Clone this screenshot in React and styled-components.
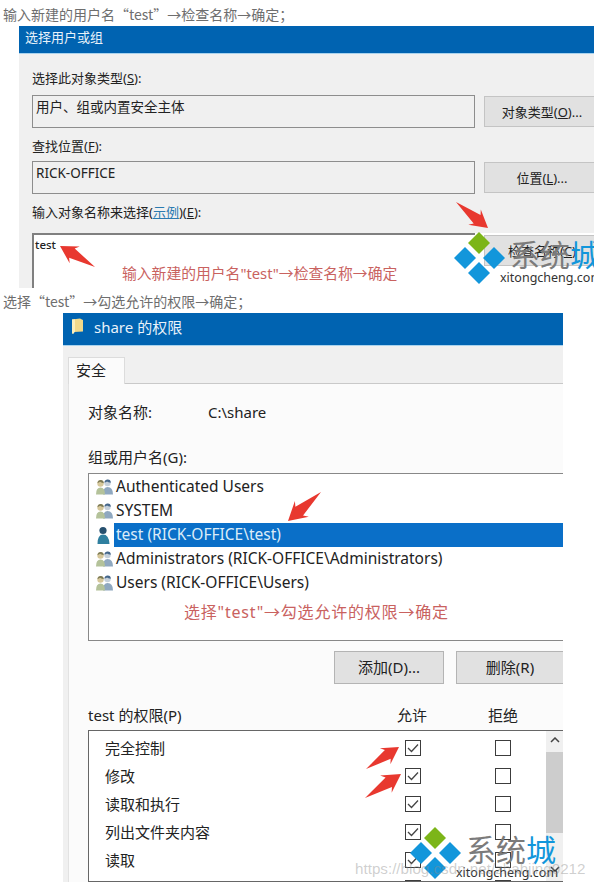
import React from "react";
import styled, { createGlobalStyle } from "styled-components";

const FONT = `"Noto Sans", "Noto Sans CJK SC", sans-serif`;
const CJK_FONT = `"Noto Sans CJK SC", "Noto Sans", sans-serif`;

const GlobalStyle = createGlobalStyle`
    html, body {
        margin: 0;
        padding: 0;
        background: #fff;
    }
    * {
        box-sizing: border-box;
    }
`;

const Page = styled.div`
    position: relative;
    width: 594px;
    height: 887px;
    padding-top: 7px;
    overflow: hidden;
    background: #fff;
    font-family: ${FONT};
    color: #222;
`;

const Caption = styled.p`
    margin: ${(p) => p.$top}px 0 5px 3px;
    height: 14px;
    font-family: ${CJK_FONT};
    font-size: 14px;
    line-height: 14px;
    color: #6e6e6e;
    white-space: nowrap;
`;

/* first dialog */
const Dialog = styled.section`
    margin-left: ${(p) => p.$left}px;
    width: ${(p) => p.$width}px;
    height: ${(p) => p.$height}px;
    overflow: hidden;
    background: #f0f0f0;
`;

const TitleBar = styled.header`
    display: flex;
    align-items: center;
    gap: 10px;
    height: ${(p) => p.$height}px;
    padding: 0 0 ${(p) => p.$lift}px ${(p) => p.$pad}px;
    background: #0063b1;
    border-bottom: 1px solid #a9d3ee;
    color: #e8f2fa;
    font-size: ${(p) => p.$size}px;
`;

const PickerBody = styled.div`
    padding: 16px 0 0 13px;
`;

const PickerLabel = styled.div`
    height: 16px;
    margin-bottom: ${(p) => p.$gap}px;
    font-size: 13px;
    line-height: 16px;
    white-space: nowrap;
`;

const Access = styled.span`
    text-decoration: underline;
`;

const HelpLink = styled.span`
    color: #2a7ab0;
    text-decoration: underline;
`;

const FieldRow = styled.div`
    display: flex;
    gap: 9px;
    margin-bottom: 10px;
    background: ${(p) => (p.$white ? "#fff" : "transparent")};
`;

const ReadonlyField = styled.div`
    flex: 0 0 443px;
    height: 33px;
    padding: 2px 0 0 3px;
    border: 1px solid #8d8d8d;
    background: #f0f0f0;
    font-size: 13.5px;
    line-height: 18px;
`;

const NameInput = styled.div`
    flex: 0 0 443px;
    height: 60px;
    padding: 2px 0 0 1px;
    border-top: 2px solid #808080;
    border-left: 2px solid #808080;
    background: #fff;
    font-size: 11.5px;
    line-height: 15px;
    font-weight: 500;
`;

const PickerButton = styled.div`
    display: flex;
    align-items: center;
    justify-content: center;
    flex: 0 0 116px;
    height: 31px;
    margin-top: ${(p) => p.$top}px;
    border: 1px solid #c4c4c4;
    background: #e1e1e1;
    font-size: 13px;
    white-space: nowrap;
`;

/* second dialog */
const FolderIcon = () => (
    <svg width="13" height="17" viewBox="0 0 13 17">
        <path d="M1 1.5 L9 .5 L12 2 L12 13.5 L3 14 L2 16 L1 15 Z" fill="#f2d98a" />
        <path d="M1 1.5 L4 1.2 L4 13.8 L2 16 L1 15 Z" fill="#fbeebc" />
    </svg>
);

const TabStrip = styled.div`
    display: flex;
    padding: 11px 0 0 5px;
`;

const Tab = styled.div`
    position: relative;
    z-index: 1;
    width: 57px;
    height: 27px;
    margin-bottom: -1px;
    padding-left: 7px;
    background: #fbfbfb;
    border: 1px solid #dcdcdc;
    border-bottom: 0;
    font-size: 15px;
    line-height: 24px;
`;

const Pane = styled.div`
    margin-left: 5px;
    height: 500px;
    padding: 18px 0 0 19px;
    overflow: hidden;
    background: #fbfbfb;
    border-top: 1px solid #c9c9c9;
    border-left: 1px solid #e2e2e2;
`;

const InfoRow = styled.div`
    display: grid;
    grid-template-columns: 120px auto;
    height: 20px;
    font-size: 15px;
    line-height: 20px;
`;

const PaneLabel = styled.div`
    height: 20px;
    margin-top: 25px;
    font-size: 15px;
    line-height: 20px;
`;

const UserList = styled.ul`
    height: 168px;
    margin: 6px 0 0;
    padding: 1px 0 0 6px;
    list-style: none;
    border: 1px solid #888;
    border-right: 0;
    background: #fff;
`;

const UserRow = styled.li`
    display: flex;
    align-items: center;
    gap: 1px;
    height: 24px;
    font-size: 15.5px;
`;

const UserName = styled.span`
    flex: 1;
    height: 24px;
    padding-left: 2px;
    line-height: 22px;
    white-space: nowrap;
    background: ${(p) => (p.$selected ? "#0a6fc8" : "transparent")};
    color: ${(p) => (p.$selected ? "#dcecf8" : "#222")};
`;

const ActionRow = styled.div`
    display: flex;
    gap: 12px;
    margin: 10px 0 0 246px;
`;

const ActionButton = styled.div`
    display: flex;
    flex: 0 0 ${(p) => p.$width}px;
    align-items: center;
    justify-content: center;
    height: 33px;
    padding-bottom: 3px;
    background: #e1e1e1;
    border: 1px solid #b4b4b4;
    font-size: 15px;
`;

const PermHeader = styled.div`
    display: grid;
    grid-template-columns: 309px 91px auto;
    height: 20px;
    margin-top: 21px;
    font-size: 15px;
    line-height: 20px;
`;

const PermList = styled.div`
    display: flex;
    height: 152px;
    margin-top: 5px;
    overflow: hidden;
    border: 1px solid #666;
    border-right: 0;
    background: #fff;
`;

const PermRows = styled.div`
    flex: 1;
    padding: 3px 0 0 16px;
`;

const PermRow = styled.div`
    display: grid;
    grid-template-columns: 300px 90px 16px;
    align-items: center;
    height: 28px;
    font-size: 15px;
`;

const PermName = styled.span`
    padding-bottom: 2px;
`;

const Box = styled.div`
    display: flex;
    align-items: center;
    justify-content: center;
    width: 16px;
    height: 16px;
    border: 1px solid #3c3c3c;
    background: #fff;
`;

const CheckMark = () => (
    <svg width="12" height="10" viewBox="0 0 12 10">
        <path d="M1 5 L4.5 8.5 L11 1.5" fill="none" stroke="#444" strokeWidth="1.3" />
    </svg>
);

const Scrollbar = styled.div`
    display: flex;
    flex: 0 0 17px;
    flex-direction: column;
    background: #f0f0f0;
`;

const ScrollArrow = styled.div`
    display: flex;
    flex: 0 0 ${(p) => p.$height}px;
    align-items: center;
    justify-content: center;
    padding-bottom: 4px;
`;

const ScrollThumb = styled.div`
    flex: 0 0 81px;
    background: #cdcdcd;
`;

const ScrollGap = styled.div`
    flex: 1;
`;

const Chevron = ({ down }) => (
    <svg width="10" height="6" viewBox="0 0 10 6">
        <path d={down ? "M1 1 L5 5 L9 1" : "M1 5 L5 1 L9 5"} fill="none" stroke="#444" strokeWidth="1.5" />
    </svg>
);

const GroupIcon = () => (
    <svg width="18" height="16" viewBox="0 0 18 16" style={{ flex: "none" }}>
        <circle cx="12.5" cy="4" r="3.2" fill="#c5d0da" />
        <path d="M9.4 3.6 Q10 .4 12.8 .5 Q15.8 .6 15.8 3.8 Q13 3.4 12 2.4 Q11 3.4 9.4 3.6 Z" fill="#45678a" />
        <path d="M8 15.5 Q8 8 12.5 8 Q18 8 18 15.5 Z" fill="#8fa8c0" />
        <circle cx="5.5" cy="4.5" r="3.2" fill="#d6c79a" />
        <path d="M2.4 4 Q3 .8 5.8 .9 Q8.8 1 8.8 4.2 Q6 3.8 5 2.8 Q4 3.8 2.4 4 Z" fill="#7c7a55" />
        <path d="M1 15.5 Q1 8.5 5.5 8.5 Q10 8.5 10 15.5 Z" fill="#b4c29a" />
    </svg>
);

const UserIcon = () => (
    <svg width="18" height="19" viewBox="0 0 18 19" style={{ flex: "none" }}>
        <circle cx="8" cy="4.5" r="3.6" fill="#26506f" />
        <path d="M2.5 18 Q2.5 8.5 8 8.5 Q14 8.5 14.5 18 Z" fill="#2f7f9f" />
    </svg>
);

/* things lying over the screenshots */
const Annotation = styled.div`
    position: absolute;
    left: ${(p) => p.$left}px;
    top: ${(p) => p.$top}px;
    font-size: ${(p) => p.$size}px;
    letter-spacing: ${(p) => p.$spacing}px;
    line-height: 20px;
    color: #c9625f;
    white-space: nowrap;
`;

const Overlay = styled.svg`
    position: absolute;
    left: 0;
    top: 0;
`;

const Watermark = styled.div`
    position: absolute;
    left: ${(p) => p.$left}px;
    top: ${(p) => p.$top}px;
    display: flex;
    white-space: nowrap;
`;

const MarkText = styled.div`
    display: flex;
    flex-direction: column;
    margin-left: -5px;
    padding-top: 8px;
`;

const MarkName = styled.div`
    margin-left: 10px;
    font-size: 30px;
    line-height: 30px;
    color: #7b7b7b;
`;

const MarkAccent = styled.span`
    color: #1296db;
`;

const MarkDomain = styled.div`
    font-size: 12.5px;
    line-height: 16px;
    color: #333;
`;

const BlogUrl = styled.div`
    position: absolute;
    left: 355px;
    top: 859px;
    font-family: "Liberation Sans", sans-serif;
    font-size: 15.2px;
    line-height: 20px;
    color: rgba(140, 140, 140, 0.42);
    white-space: nowrap;
`;

const Diamond = ({ x, y, color }) => (
    <polygon points={`${x},${y - 11} ${x + 11},${y} ${x},${y + 11} ${x - 11},${y}`} fill={color} />
);

const Logo = () => (
    <svg width="51" height="52" viewBox="0 0 51 52" style={{ flex: "none" }}>
        <Diamond x={25} y={11} color="#7cb518" />
        <Diamond x={11} y={26} color="#1296db" />
        <Diamond x={40} y={26} color="#1296db" />
        <Diamond x={25} y={41} color="#1296db" />
    </svg>
);

const Mark = ({ left, top }) => (
    <Watermark $left={left} $top={top}>
        <Logo />
        <MarkText>
            <MarkName>
                系统<MarkAccent>城</MarkAccent>
            </MarkName>
            <MarkDomain>xitongcheng.com</MarkDomain>
        </MarkText>
    </Watermark>
);

const arrows = [
    [95, 267, 60, 246],
    [456, 202, 488, 228],
    [321, 492, 288, 521],
    [366, 769, 399, 747],
    [365, 798, 401, 774],
];

// long thin tail, widening into a barbed head at the tip
function arrowPoints([x1, y1, x2, y2]) {
    const len = Math.hypot(x2 - x1, y2 - y1);
    const ux = (x2 - x1) / len;
    const uy = (y2 - y1) / len;
    const at = (along, side) =>
        `${x1 + ux * along - uy * side},${y1 + uy * along + ux * side}`;
    const w = len * 0.24;
    return [
        at(0, 0),
        at(len * 0.66, w * 0.55),
        at(len * 0.58, w),
        at(len, 0),
        at(len * 0.58, -w),
        at(len * 0.66, -w * 0.55),
    ].join(" ");
}

const users = [
    { name: "Authenticated Users" },
    { name: "SYSTEM" },
    { name: "test (RICK-OFFICE\\test)", selected: true },
    { name: "Administrators (RICK-OFFICE\\Administrators)" },
    { name: "Users (RICK-OFFICE\\Users)" },
];

const perms = ["完全控制", "修改", "读取和执行", "列出文件夹内容", "读取", "写入"];

export default function App() {
    return (
        <Page>
            <GlobalStyle />
            <Caption $top={0}>输入新建的用户名“test”→检查名称→确定；</Caption>
            <Dialog $left={19} $width={575} $height={262}>
                <TitleBar $height={28} $lift={6} $pad={6} $size={13}>选择用户或组</TitleBar>
                <PickerBody>
                    <PickerLabel $gap={9}>选择此对象类型(<Access>S</Access>):</PickerLabel>
                    <FieldRow>
                        <ReadonlyField>用户、组或内置安全主体</ReadonlyField>
                        <PickerButton $top={1}>对象类型(<Access>O</Access>)...</PickerButton>
                    </FieldRow>
                    <PickerLabel $gap={7}>查找位置(<Access>F</Access>):</PickerLabel>
                    <FieldRow>
                        <ReadonlyField>RICK-OFFICE</ReadonlyField>
                        <PickerButton $top={1}>位置(<Access>L</Access>)...</PickerButton>
                    </FieldRow>
                    <PickerLabel $gap={13}>输入对象名称来选择(<HelpLink>示例</HelpLink>)(<Access>E</Access>):</PickerLabel>
                    <FieldRow $white>
                        <NameInput>test</NameInput>
                        <PickerButton $top={2}>检查名称(<Access>C</Access>)</PickerButton>
                    </FieldRow>
                </PickerBody>
            </Dialog>

            <Caption $top={6}>选择“test”→勾选允许的权限→确定；</Caption>
            <Dialog $left={63} $width={500} $height={569}>
                <TitleBar $height={33} $lift={5} $pad={8} $size={15}>
                    <FolderIcon />
                    share 的权限
                </TitleBar>
                <TabStrip>
                    <Tab>安全</Tab>
                </TabStrip>
                <Pane>
                    <InfoRow>
                        <span>对象名称:</span>
                        <span>C:\share</span>
                    </InfoRow>
                    <PaneLabel>组或用户名(G):</PaneLabel>
                    <UserList>
                        {users.map((u) => (
                            <UserRow key={u.name}>
                                {u.selected ? <UserIcon /> : <GroupIcon />}
                                <UserName $selected={u.selected}>{u.name}</UserName>
                            </UserRow>
                        ))}
                    </UserList>
                    <ActionRow>
                        <ActionButton $width={110}>添加(D)...</ActionButton>
                        <ActionButton $width={108}>删除(R)</ActionButton>
                    </ActionRow>
                    <PermHeader>
                        <span>test 的权限(P)</span>
                        <span>允许</span>
                        <span>拒绝</span>
                    </PermHeader>
                    <PermList>
                        <PermRows>
                            {perms.map((p) => (
                                <PermRow key={p}>
                                    <PermName>{p}</PermName>
                                    <Box><CheckMark /></Box>
                                    <Box />
                                </PermRow>
                            ))}
                        </PermRows>
                        <Scrollbar>
                            <ScrollArrow $height={21}><Chevron /></ScrollArrow>
                            <ScrollThumb />
                            <ScrollGap />
                            <ScrollArrow $height={21}><Chevron down /></ScrollArrow>
                        </Scrollbar>
                    </PermList>
                </Pane>
            </Dialog>

            <Annotation $left={122} $top={263} $size={14.8} $spacing={0}>输入新建的用户名"test"→检查名称→确定</Annotation>
            <Annotation $left={184} $top={602} $size={16} $spacing={0.8}>选择"test"→勾选允许的权限→确定</Annotation>
            <Overlay width="594" height="887">
                {arrows.map((a) => (
                    <polygon key={a.join()} points={arrowPoints(a)} fill="#e8382f" />
                ))}
            </Overlay>
            <Mark left={454} top={232} />
            <Mark left={410} top={827} />
            <BlogUrl>https://blog.csdn.net/zhahjing0212</BlogUrl>
        </Page>
    );
}
